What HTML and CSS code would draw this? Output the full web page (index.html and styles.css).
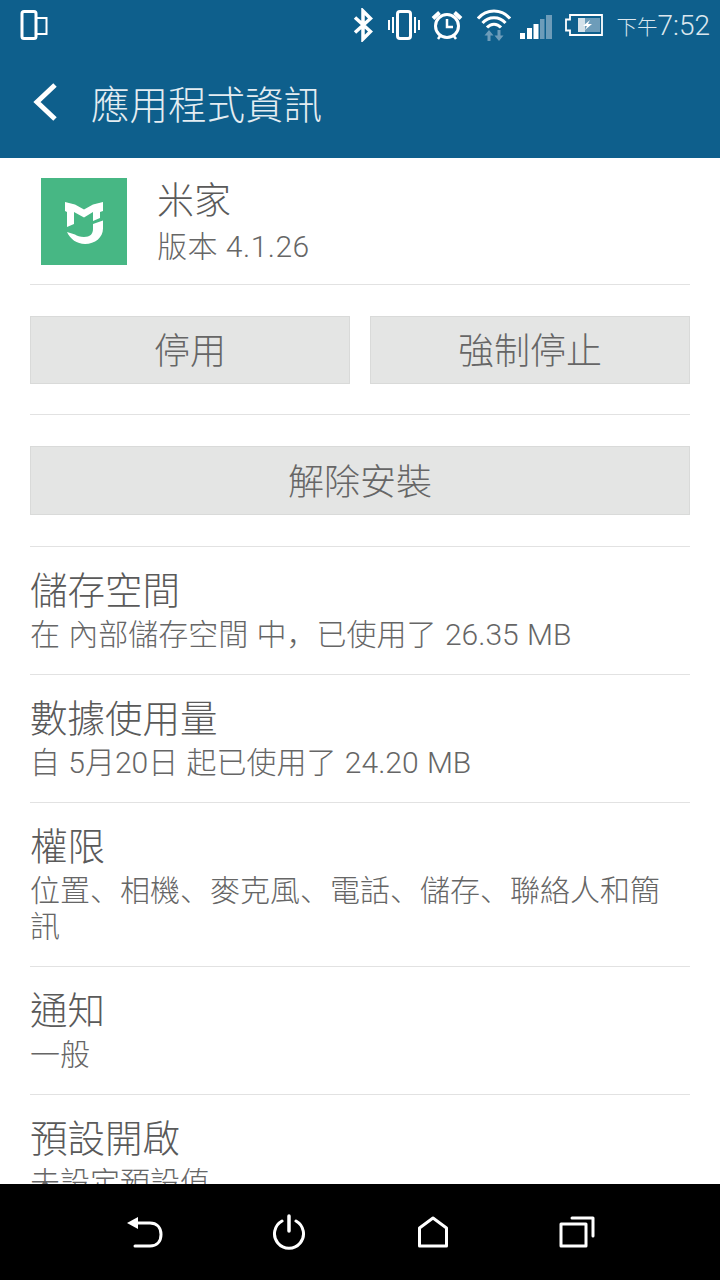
FILE: index.html
```html
<!DOCTYPE html>
<html lang="zh-Hant">
<head>
    <meta charset="UTF-8">
    <meta name="viewport" content="width=device-width, initial-scale=1.0">
    <title>應用程式資訊</title>
    <link rel="stylesheet" href="styles.css">
</head>
<body>
    <div class="phone">
        <!-- Status bar -->
        <div class="status-bar">
            <svg width="28" height="30" viewBox="0 0 28 30" fill="none" stroke="#fff">
                <rect x="2" y="1.500" width="14" height="27" rx="2" stroke-width="3"/>
                <path d="M16 8h10.500v16H16" stroke-width="2"/>
            </svg>
            <div class="status-right">
                <svg width="20" height="34" viewBox="0 0 20 34" fill="none" stroke="#fff" stroke-width="3.500">
                    <path d="M2 9.500 17.500 23.500l-7.500 7.500V3l7.500 7.500L2 24.500"/>
                </svg>
                <svg class="gap-vibrate" width="32" height="30" viewBox="0 0 32 30" fill="none" stroke="#fff">
                    <rect x="9.500" y="1.500" width="13" height="27" rx="2.500" stroke-width="3"/>
                    <path d="M5 7v16M1 10v10M27 7v16M31 10v10" stroke-width="2"/>
                </svg>
                <svg class="gap-alarm" width="32" height="32" viewBox="0 0 32 32" fill="none" stroke="#fff" stroke-width="3">
                    <circle cx="16" cy="17" r="11.500"/>
                    <path d="M16 10v8h6" stroke-width="2.500"/>
                    <path d="M2 9.500 8.500 3.500M30 9.500 23.500 3.500" stroke-width="4"/>
                    <path d="M7 30l2.500-3.500M25 30l-2.500-3.500" stroke-width="2.500"/>
                </svg>
                <svg class="gap-wifi" width="34" height="34" viewBox="0 0 34 34" fill="none">
                    <g stroke="#fff" stroke-width="3">
                        <path d="M1 10.500C9.500 .5 24.500 .5 33 10.500"/>
                        <path d="M5.500 15C11.500 8 22.500 8 28.500 15"/>
                        <path d="M10 19.500C14 15 20 15 24 19.500"/>
                    </g>
                    <path d="M12 22l4.500 5.500h-3V33h-3v-5.500h-3zM22 33l-4.500-5.500h3V22h3v5.500h3z" fill="#6d9cb9"/>
                </svg>
                <svg class="gap-signal" width="32" height="24" viewBox="0 0 32 24">
                    <rect x="0" y="18" width="5" height="6" fill="#fff"/>
                    <rect x="7" y="13" width="5" height="11" fill="#fff"/>
                    <rect x="13.500" y="9" width="5" height="15" fill="#fff"/>
                    <rect x="20" y="4" width="4.500" height="20" fill="#6d9cb9"/>
                    <rect x="26" y="0" width="6" height="24" fill="#6d9cb9"/>
                </svg>
                <svg class="gap-battery" width="38" height="22" viewBox="0 0 38 22">
                    <path d="M5 1h32v20H5v-4.500H1v-11h4z" fill="none" stroke="#fff" stroke-width="1.800"/>
                    <rect x="13" y="4" width="22" height="14" fill="#6d9cb9"/>
                    <rect x="13" y="4" width="7" height="14" fill="#d5e2ea"/>
                    <path d="M25 6l-7 6h4l-2 4 7-6h-4z" fill="#fff"/>
                </svg>
                <div class="clock"><span class="clock-ampm">下午</span>7:52</div>
            </div>
        </div>

        <!-- Title bar -->
        <div class="title-bar">
            <svg width="28" height="38" viewBox="0 0 28 38" fill="none" stroke="#fff" stroke-width="5">
                <path d="M24 2 6 19l18 17"/>
            </svg>
            <h1>應用程式資訊</h1>
        </div>

        <div class="content">
            <div class="app-head">
                <div class="app-logo">
                    <svg width="50" height="55" viewBox="0 0 50 55" fill="#fff">
                        <path d="M6 8l10 2.500 9 5 9-5 10-2.500v9l-3 1v6l-7 3V18l-9 5.500L15 18v12l-7 3V18l-2-1z"/>
                        <path d="M8 38l8 2.500c2 1.500 5 2.500 9 2.500 6 0 9-3 9-8v-5l10-3.500v8c0 9-8 15.500-18 15.500-8 0-15-5-18-12z"/>
                    </svg>
                </div>
                <div class="app-text">
                    <div class="app-name">米家</div>
                    <div class="app-version">版本 4.1.26</div>
                </div>
            </div>

            <div class="button-row">
                <div class="btn">停用</div>
                <div class="btn">強制停止</div>
            </div>
            <div class="button-row button-row-wide">
                <div class="btn">解除安裝</div>
            </div>

            <div class="info-row">
                <div class="info-title">儲存空間</div>
                <div class="info-sub info-sub-punct" lang="zh-Hans">在 內部儲存空間 中，已使用了 26.35 MB</div>
            </div>
            <div class="info-row">
                <div class="info-title">數據使用量</div>
                <div class="info-sub">自 5月20日 起已使用了 24.20 MB</div>
            </div>
            <div class="info-row">
                <div class="info-title">權限</div>
                <div class="info-sub info-sub-punct" lang="zh-Hans">位置、相機、麥克風、電話、儲存、聯絡人和簡訊</div>
            </div>
            <div class="info-row">
                <div class="info-title">通知</div>
                <div class="info-sub">一般</div>
            </div>
            <div class="info-row">
                <div class="info-title">預設開啟</div>
                <div class="info-sub">未設定預設值</div>
            </div>
        </div>

        <!-- Navigation bar -->
        <div class="nav-bar">
            <svg width="36" height="32" viewBox="0 0 36 32" fill="none" stroke="#fff" stroke-width="3" stroke-linecap="round">
                <path d="M8 7h15c6.500 0 11 4 11 11.500S29.500 30 23 30H8" stroke-linejoin="round"/>
                <path d="M0 7 11 1v12z" fill="#fff" stroke="none"/>
            </svg>
            <svg width="34" height="36" viewBox="0 0 34 36" fill="none" stroke="#fff" stroke-linecap="round">
                <path d="M10 7a14.500 14.500 0 1 0 14 0" stroke-width="3"/>
                <path d="M17 2v15" stroke-width="3.500"/>
            </svg>
            <svg width="32" height="32" viewBox="0 0 32 32" fill="none" stroke="#fff" stroke-width="3" stroke-linejoin="round">
                <path d="M2.500 12 16 2l13.500 10v18h-27z"/>
            </svg>
            <svg width="36" height="32" viewBox="0 0 36 32" fill="none" stroke="#fff" stroke-width="3" stroke-linejoin="round" stroke-linecap="round">
                <rect x="2" y="8" width="25" height="22"/>
                <path d="M13 2h21v18"/>
            </svg>
        </div>
    </div>
</body>
</html>
```

FILE: styles.css
```css
body {
    margin: 0;
    padding: 0;
    background-color: #fff;
    font-family: Roboto, "Noto Sans CJK TC", sans-serif;
    font-weight: 300;
}

.phone {
    width: 720px;
    height: 1280px;
    display: flex;
    flex-direction: column;
    overflow: hidden;
}

.status-bar {
    height: 50px;
    flex: none;
    display: flex;
    align-items: center;
    justify-content: space-between;
    padding: 0 10px 0 20px;
    background-color: #0e5f8c;
    color: #fff;
}

.status-right {
    display: flex;
    align-items: center;
}

.gap-vibrate {
    margin-left: 15px;
}

.gap-alarm {
    margin-left: 11px;
}

.gap-wifi {
    margin-left: 14px;
}

.gap-signal {
    margin-left: 9px;
    margin-top: 3px;
}

.gap-battery {
    margin-left: 13px;
}

.clock {
    margin-left: 14px;
    font-size: 28px;
    color: #dbe7ee;
}

.clock-ampm {
    font-size: 20.5px;
}

.title-bar {
    height: 108px;
    flex: none;
    display: flex;
    align-items: center;
    padding: 0 0 4px 31px;
    box-sizing: border-box;
    background-color: #0e5f8c;
}

.title-bar h1 {
    margin: 0 0 0 32px;
    font-size: 38.5px;
    font-weight: 300;
    color: #e4edf2;
}

.content {
    flex: 1;
    min-height: 0;
    overflow: hidden;
    padding: 0 30px;
    color: #5a5a5a;
}

.app-head {
    height: 126px;
    display: flex;
    align-items: center;
    padding-left: 11px;
    border-bottom: 1px solid #e2e2e2;
}

.app-logo {
    width: 86px;
    height: 87px;
    margin-right: 30px;
    display: flex;
    align-items: center;
    justify-content: center;
    background-color: #47b784;
}

.app-text {
    margin-top: 4px;
}

.app-name {
    font-size: 37px;
    line-height: 46px;
}

.app-version {
    margin-top: 2px;
    font-size: 30px;
    line-height: 40px;
    letter-spacing: 0.5px;
    color: #666;
}

.button-row {
    display: flex;
    gap: 20px;
    padding: 31px 0 30px;
    border-bottom: 1px solid #e2e2e2;
}

.button-row-wide {
    padding-bottom: 31px;
}

.btn {
    flex: 1;
    height: 66px;
    line-height: 71px;
    text-align: center;
    font-size: 36px;
    color: #666;
    background-color: #e4e5e4;
    border: 1px solid #d9dad9;
}

.button-row-wide .btn {
    height: 67px;
    line-height: 73px;
}

.info-row {
    padding: 18px 0 21px;
    border-bottom: 1px solid #e2e2e2;
}

.info-title {
    font-size: 37.5px;
    line-height: 52px;
}

.info-sub {
    padding-right: 10px;
    font-size: 30px;
    line-height: 36px;
    word-spacing: 1px;
    color: #666;
}

.info-sub-punct {
    font-family: Roboto, "Noto Sans CJK SC", sans-serif;
}

.nav-bar {
    height: 96px;
    flex: none;
    display: grid;
    grid-template-columns: repeat(4, 144px);
    justify-items: center;
    align-items: center;
    padding-left: 73px;
    background-color: #000;
}
```
